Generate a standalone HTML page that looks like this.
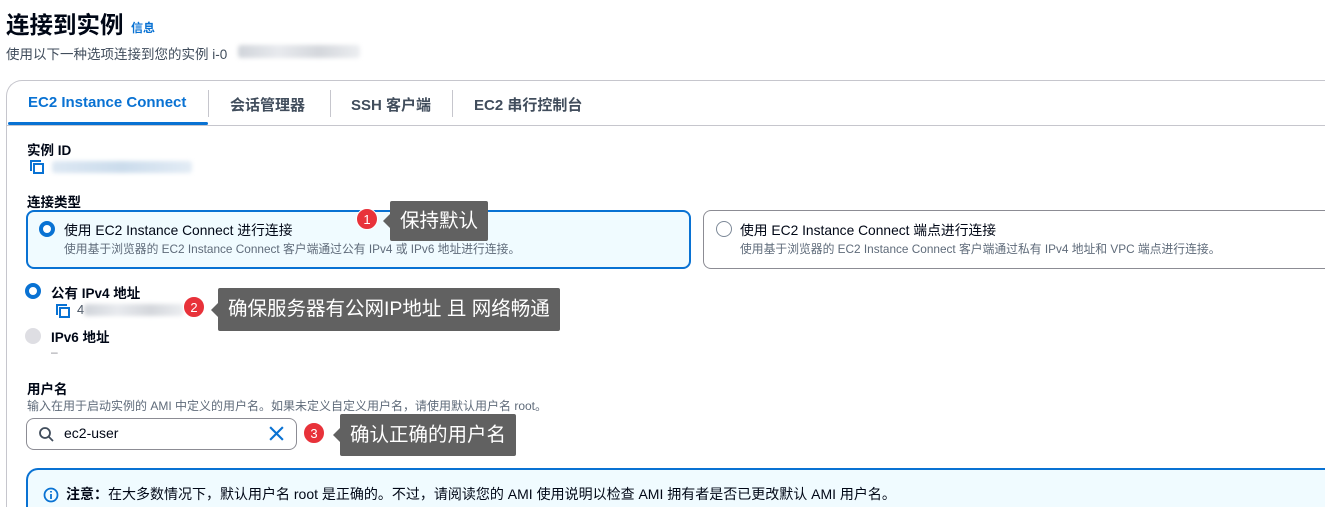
<!DOCTYPE html>
<html><head><meta charset="utf-8"><style>
*{margin:0;padding:0;box-sizing:border-box}
html,body{width:1325px;height:507px;overflow:hidden}
body{background:#fff;font-family:"Liberation Sans","Noto Sans CJK SC",sans-serif;color:#000716;position:relative}
.a{position:absolute;white-space:nowrap}
.b{font-weight:bold}
.radio{position:absolute;width:16px;height:16px;border-radius:50%}
.on{border:4.5px solid #0972d3;background:#fff}
.badge{position:absolute;width:22px;height:22px;border-radius:50%;background:#e8323a;color:#fff;font-size:13px;text-align:center;line-height:22px;border:1px solid #fff}
.tip{position:absolute;background:#616161;color:#fff;font-size:19.5px;padding:0 10px;border-radius:2px}
.tip:before{content:"";position:absolute;left:-7px;top:50%;margin-top:-7px;border:7px solid transparent;border-left:0;border-right-color:#616161}
.blur{position:absolute;background:linear-gradient(90deg,#d0d4da,#e8eaee,#d4d7dc,#eceef1);filter:blur(2px);border-radius:3px}
</style></head><body>
<div class="a b" style="left:6px;top:6px;font-size:23.5px;">连接到实例</div>
<div class="a b" style="left:131px;top:19px;font-size:12px;color:#0972d3">信息</div>
<div class="a" style="left:6px;top:43px;font-size:13.5px;color:#414d5c">使用以下一种选项连接到您的实例 i-0</div>
<div class="blur" style="left:238px;top:45px;width:122px;height:13px"></div>

<div style="position:absolute;left:6px;top:80px;width:1325px;height:427px;border:1px solid #c6c6cd;border-bottom:0;border-right:0;border-radius:16px 0 0 0"></div>
<div style="position:absolute;left:7px;top:125px;width:1318px;height:1px;background:#c6c6cd"></div>
<div class="a b" style="left:28px;top:94px;font-size:15px;color:#0972d3">EC2 Instance Connect</div>
<div style="position:absolute;left:8px;top:122px;width:200px;height:3px;background:#0972d3;border-radius:2px"></div>
<div style="position:absolute;left:208px;top:90px;width:1px;height:27px;background:#c6c6cd"></div>
<div class="a b" style="left:230px;top:94px;font-size:15px;color:#414d5c">会话管理器</div>
<div style="position:absolute;left:330px;top:90px;width:1px;height:27px;background:#c6c6cd"></div>
<div class="a b" style="left:351px;top:94px;font-size:15px;color:#414d5c">SSH 客户端</div>
<div style="position:absolute;left:452px;top:90px;width:1px;height:27px;background:#c6c6cd"></div>
<div class="a b" style="left:474px;top:94px;font-size:15px;color:#414d5c">EC2 串行控制台</div>

<div class="a b" style="left:27px;top:139px;font-size:13.5px">实例 ID</div>
<svg class="a" style="left:29px;top:159px" width="16" height="16" viewBox="0 0 16 16" fill="none" stroke="#0972d3" stroke-width="2"><path d="M2 12V2h10"/><rect x="5" y="5" width="9" height="9"/></svg>
<div class="blur" style="left:52px;top:161px;width:140px;height:12px;background:linear-gradient(90deg,#dde8f3,#cbdcec,#e3ecf5)"></div>

<div class="a b" style="left:27px;top:191px;font-size:13.5px">连接类型</div>
<div style="position:absolute;left:26px;top:210px;width:665px;height:59px;border:2px solid #0972d3;border-radius:8px;background:#f0fbff"></div>
<div class="radio on" style="left:39px;top:221px"></div>
<div class="a" style="left:64px;top:219px;font-size:13.8px">使用 EC2 Instance Connect 进行连接</div>
<div class="a" style="left:64px;top:240px;font-size:11.8px;color:#5f6b7a">使用基于浏览器的 EC2 Instance Connect 客户端通过公有 IPv4 或 IPv6 地址进行连接。</div>
<div style="position:absolute;left:703px;top:210px;width:622px;height:59px;border:1px solid #8c8c94;border-right:0;border-radius:8px 0 0 8px"></div>
<div class="radio" style="left:716px;top:221px;border:1.5px solid #7d8998"></div>
<div class="a" style="left:740px;top:219px;font-size:13.8px">使用 EC2 Instance Connect 端点进行连接</div>
<div class="a" style="left:740px;top:240px;font-size:11.8px;color:#5f6b7a">使用基于浏览器的 EC2 Instance Connect 客户端通过私有 IPv4 地址和 VPC 端点进行连接。</div>
<div class="badge" style="left:356px;top:208px">1</div>
<div class="tip" style="left:390px;top:201px;height:40px;line-height:40px">保持默认</div>

<div class="radio on" style="left:25px;top:283px"></div>
<div class="a b" style="left:51px;top:282px;font-size:13.5px">公有 IPv4 地址</div>
<svg class="a" style="left:55px;top:303px" width="16" height="16" viewBox="0 0 16 16" fill="none" stroke="#0972d3" stroke-width="2"><path d="M2 12V2h10"/><rect x="5" y="5" width="9" height="9"/></svg>
<div class="a" style="left:77px;top:302px;font-size:13px;color:#414d5c">4</div>
<div class="blur" style="left:84px;top:304px;width:100px;height:12px"></div>
<div class="badge" style="left:183px;top:296px">2</div>
<div class="tip" style="left:218px;top:288px;height:43px;line-height:43px">确保服务器有公网IP地址 且 网络畅通</div>
<div class="radio" style="left:25px;top:328px;background:#dedee3"></div>
<div class="a b" style="left:51px;top:326px;font-size:13.5px">IPv6 地址</div>
<div class="a" style="left:51px;top:345px;font-size:12px;color:#8c8c94">–</div>

<div class="a b" style="left:27px;top:378px;font-size:13.5px">用户名</div>
<div class="a" style="left:27px;top:397px;font-size:12px;color:#5f6b7a">输入在用于启动实例的 AMI 中定义的用户名。如果未定义自定义用户名，请使用默认用户名 root。</div>
<div style="position:absolute;left:26px;top:418px;width:271px;height:32px;border:1px solid #8c8c94;border-radius:8px"></div>
<svg class="a" style="left:38px;top:426px" width="16" height="16" viewBox="0 0 16 16" fill="none" stroke="#414d5c" stroke-width="1.8"><circle cx="7" cy="7" r="5"/><path d="M11 11l4 4"/></svg>
<div class="a" style="left:64px;top:425px;font-size:14px">ec2-user</div>
<svg class="a" style="left:268px;top:425px" width="17" height="17" viewBox="0 0 16 16" fill="none" stroke="#0972d3" stroke-width="2"><path d="M2 2l12 12M14 2L2 14"/></svg>
<div class="badge" style="left:303px;top:422px">3</div>
<div class="tip" style="left:340px;top:414px;height:42px;line-height:42px">确认正确的用户名</div>

<div style="position:absolute;left:26px;top:468px;width:1299px;height:39px;border:2px solid #0972d3;border-bottom:0;border-right:0;border-radius:12px 0 0 0;background:#f0fbff"></div>
<svg class="a" style="left:43px;top:487px" width="16" height="16" viewBox="0 0 16 16" fill="none" stroke="#0972d3" stroke-width="1.8"><circle cx="8" cy="8" r="6.5"/><path d="M8 7v5M8 4v1.5"/></svg>
<div class="a" style="left:66px;top:486px;font-size:14px;line-height:17px"><b>注意：</b>在大多数情况下，默认用户名 root 是正确的。不过，请阅读您的 AMI 使用说明以检查 AMI 拥有者是否已更改默认 AMI 用户名。</div>
</body></html>
